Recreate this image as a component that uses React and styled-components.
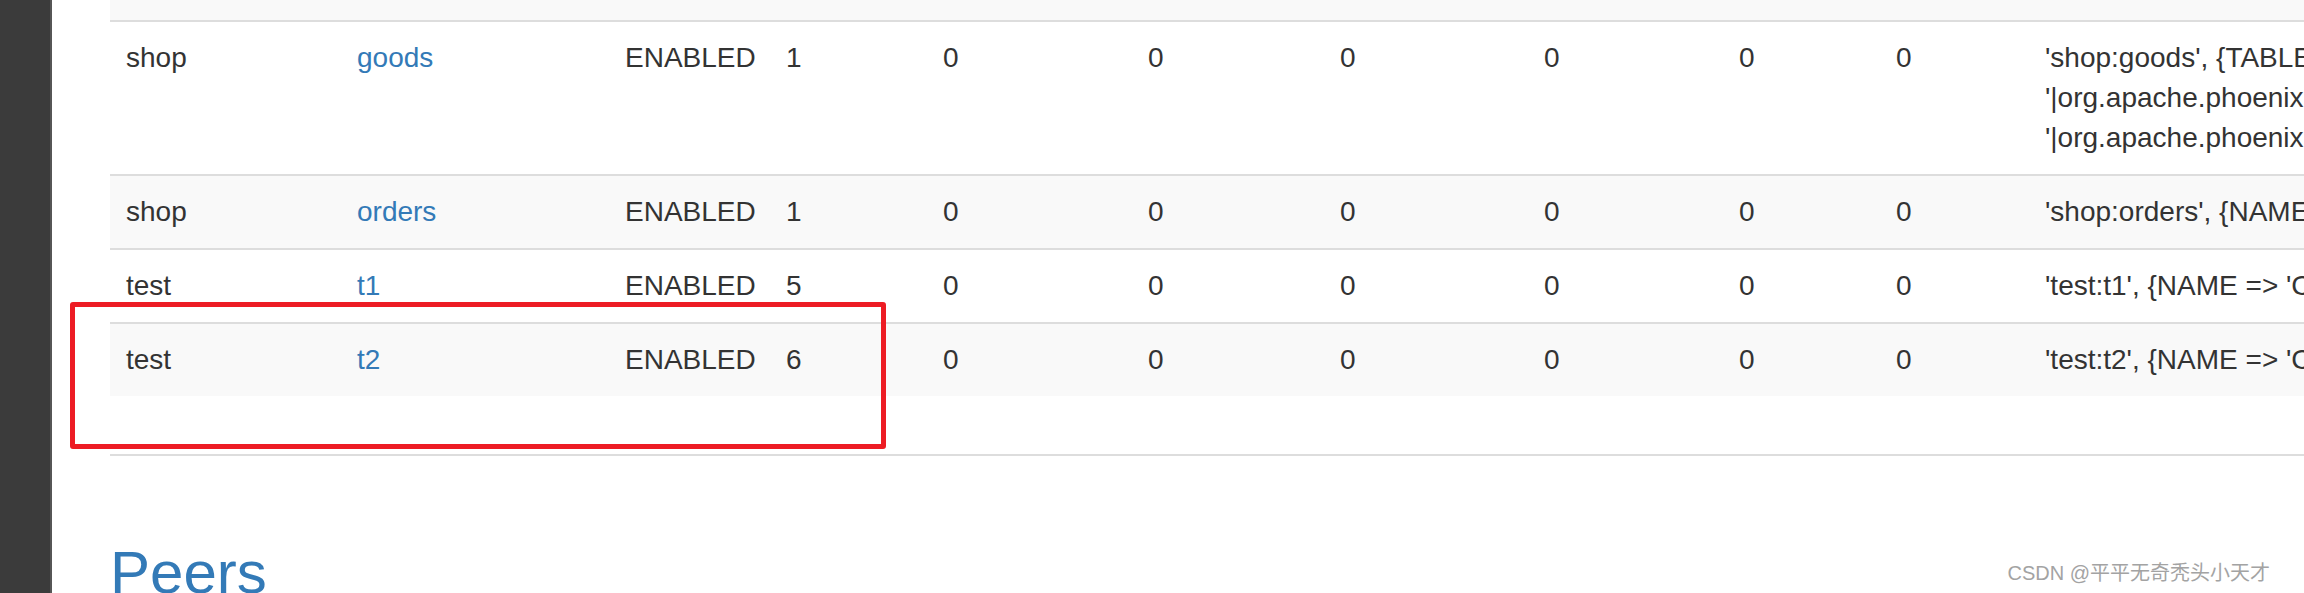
import React from 'react';
import styled, { createGlobalStyle } from 'styled-components';

const GlobalStyle = createGlobalStyle`
  html, body {
    margin: 0;
    padding: 0;
    background: #fff;
    overflow: hidden;
  }
  body {
    font-family: "Liberation Sans", Arial, Helvetica, sans-serif;
    color: #333;
  }
`;

const colWidths = [231, 268, 161, 157, 205, 192, 204, 195, 157, 149, 1600];

const tables = [
  {
    ns: 'shop',
    name: 'goods',
    state: 'ENABLED',
    regions: 1,
    desc: [
      "'shop:goods', {TABLE_ATTRIBUTES => {coprocessor$1 =>",
      "'|org.apache.phoenix.coprocessor.ScanRegionObserver|805306366|', coprocessor$2 =>",
      "'|org.apache.phoenix.coprocessor.UngroupedAggregateRegionObserver|805306366|', coprocessor$3 =>",
    ],
  },
  { ns: 'shop', name: 'orders', state: 'ENABLED', regions: 1, desc: ["'shop:orders', {NAME => '0', BLOOMFILTER => 'NONE'}"] },
  { ns: 'test', name: 't1', state: 'ENABLED', regions: 5, desc: ["'test:t1', {NAME => 'CF', BLOOMFILTER => 'ROW'}"] },
  { ns: 'test', name: 't2', state: 'ENABLED', regions: 6, desc: ["'test:t2', {NAME => 'CF', BLOOMFILTER => 'ROW'}"] },
];

const App = () => {
  return (
    <Page>
      <GlobalStyle />
      <Sidebar />
      <Main>
        <TableWrap>
          <Table>
            <colgroup>
              {colWidths.map((w, i) => (
                <col key={i} style={{ width: w }} />
              ))}
            </colgroup>
            <tbody>
              <CutRow>
                <td colSpan={colWidths.length} />
              </CutRow>
              {tables.map((t, i) => (
                <Row key={t.name} striped={i % 2 === 1}>
                  <Cell>{t.ns}</Cell>
                  <Cell>
                    <TableLink href="#">{t.name}</TableLink>
                  </Cell>
                  <Cell>{t.state}</Cell>
                  <Cell>{t.regions}</Cell>
                  {[0, 1, 2, 3, 4, 5].map(k => (
                    <Cell key={k}>0</Cell>
                  ))}
                  <DescCell>
                    {t.desc.map((line, j) => (
                      <div key={j}>{line}</div>
                    ))}
                  </DescCell>
                </Row>
              ))}
            </tbody>
          </Table>
        </TableWrap>
        <Rule />
        <SectionTitle>Peers</SectionTitle>
      </Main>
      <Highlight />
      <Watermark>CSDN @平平无奇秃头小天才</Watermark>
    </Page>
  );
};

const Page = styled.div`
  position: relative;
  display: flex;
  width: 2304px;
  height: 593px;
  overflow: hidden;
`;

const Sidebar = styled.div`
  flex: 0 0 50px;
  background: #3b3b3b;
  border-right: 2px solid #565656;
`;

const Main = styled.div`
  flex: 1;
  min-width: 0;
  padding-left: 58px;
  display: flex;
  flex-direction: column;

  & > * {
    flex-shrink: 0;
  }
`;

const TableWrap = styled.div`
  overflow: hidden;
`;

const Table = styled.table`
  table-layout: fixed;
  width: ${colWidths.reduce((a, b) => a + b, 0)}px;
  border-collapse: collapse;
  border-spacing: 0;
  font-size: 28px;
  line-height: 40px;
`;

const CutRow = styled.tr`
  height: 21px;
  background: #f9f9f9;
  td {
    padding: 0;
  }
`;

const Row = styled.tr`
  background: ${props => (props.striped ? '#f9f9f9' : '#fff')};
  border-top: 2px solid #ddd;
`;

const Cell = styled.td`
  padding: 16px;
  vertical-align: top;
  white-space: nowrap;
  overflow: hidden;
`;

const DescCell = styled(Cell)`
  overflow: visible;
`;

const TableLink = styled.a`
  color: #337ab7;
  text-decoration: none;
`;

const Rule = styled.div`
  margin-top: 58px;
  border-top: 2px solid #ddd;
`;

const SectionTitle = styled.h2`
  margin: 84px 0 0;
  font-size: 60px;
  font-weight: 500;
  line-height: 66px;
  color: #337ab7;
`;

const Highlight = styled.div`
  position: absolute;
  left: 70px;
  top: 302px;
  width: 816px;
  height: 147px;
  box-sizing: border-box;
  border: 5px solid #ed1c24;
  border-radius: 3px;
`;

const Watermark = styled.div`
  position: absolute;
  right: 34px;
  top: 561px;
  font-family: "Liberation Sans", "Noto Sans CJK SC", sans-serif;
  font-size: 20px;
  line-height: 24px;
  color: #a3a3a3;
  white-space: nowrap;
`;

export default App;
